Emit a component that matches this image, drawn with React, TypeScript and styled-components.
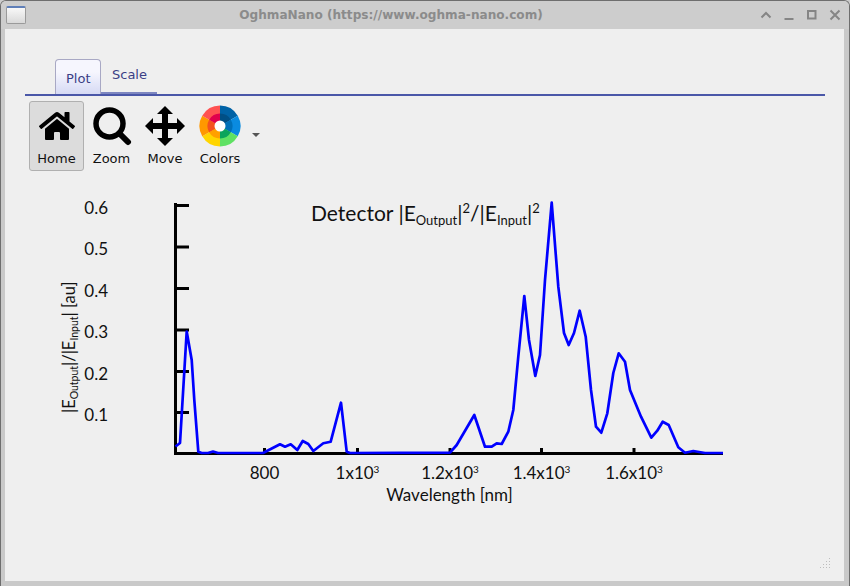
import React from "react";
import styled, { createGlobalStyle } from "styled-components";
import { FaHome } from "react-icons/fa";

const GlobalStyle = createGlobalStyle`
  html, body {
    margin: 0;
    padding: 0;
    background: #cdcdcd;
  }
`;

const Window = styled.div`
  width: 850px;
  height: 586px;
  box-sizing: border-box;
  display: flex;
  flex-direction: column;
  background: #c9c9c9;
  border: 1px solid #6e6e6e;
  border-bottom: 0;
  border-radius: 6px 6px 0 0;
  overflow: hidden;
  font-family: "DejaVu Sans", sans-serif;
`;

const TitleBar = styled.div`
  height: 28px;
  flex: none;
  display: flex;
  align-items: center;
  padding: 0 7px 0 5px;
  background: #cdcdcd;
`;

const AppIcon = styled.div`
  width: 20px;
  height: 18px;
  box-sizing: border-box;
  border: 1px solid #9a9a9a;
  border-top: 2px solid #5f7fb8;
  border-radius: 2px;
  background: linear-gradient(#f8f8f8, #d9d9d9);
`;

const Title = styled.div`
  flex: 1;
  text-align: center;
  font-size: 12.1px;
  font-weight: bold;
  color: #8b8b8b;
  padding-right: 3px;
`;

const Controls = styled.div`
  display: flex;
  gap: 9px;
`;

const Body = styled.div`
  flex: 1;
  margin: 0 5px 5px 4px;
  background: #efefef;
  display: flex;
  flex-direction: column;
  padding: 30px 19px 0 20px;
  position: relative;
`;

const TabBar = styled.div`
  display: flex;
  height: 35px;
  padding-left: 30px;
  border-bottom: 2px solid #4a57a8;
`;

const Tab = styled.div<{ $active?: boolean }>`
  box-sizing: border-box;
  height: 35px;
  width: ${({ $active }) => ($active ? "46px" : "56px")};
  padding-left: ${({ $active }) => ($active ? "10px" : "11px")};
  padding-top: ${({ $active }) => ($active ? "11px" : "8px")};
  font-size: 13px;
  color: #3b3f86;
  border-radius: 4px 4px 0 0;
  ${({ $active }) =>
    $active
      ? `border: 1px solid #a8a8c4;
         border-bottom: 0;
         background: linear-gradient(#f6f6fe 35%, #d6daf4);`
      : `border-bottom: 2px solid #7d86c0;
         border-radius: 0;`}
`;

const Toolbar = styled.div`
  display: flex;
  align-items: flex-start;
  gap: 0;
  padding: 5px 0 0 4px;
`;

const ToolButton = styled.div<{ $active?: boolean; $w: number }>`
  box-sizing: border-box;
  width: ${({ $w }) => $w}px;
  height: 70px;
  display: flex;
  flex-direction: column;
  align-items: center;
  font-size: 13px;
  color: #111;
  border-radius: 3px;
  border: 1px solid ${({ $active }) => ($active ? "#b0b0b0" : "transparent")};
  background: ${({ $active }) => ($active ? "#dcdcdc" : "transparent")};
`;

const ToolIcon = styled.div`
  height: 46px;
  margin: 1px 0 2px;
  display: flex;
  align-items: center;
  justify-content: center;
`;

const Caret = styled.div`
  width: 0;
  height: 0;
  margin: 32px 0 0 3px;
  border-left: 4px solid transparent;
  border-right: 4px solid transparent;
  border-top: 4px solid #555;
`;

const Chart = styled.svg`
  display: block;
  margin-top: 14px;
  font-family: Lato, sans-serif;
`;

const Grip = styled.svg`
  position: absolute;
  right: 12px;
  bottom: 12px;
`;

const curve =
  "175.5,446.5 180,443 186.7,331.5 191.7,360 194.3,400 198.3,451.7 201.7,453 208,453 213,451.5 218,453 263,453 280,444.3 285,446.7 290.7,444.3 297.3,450 302.7,441 308.3,444 313.3,451 323.3,443.3 330.7,441.7 341,402.7 346.7,451.7 350,453 450,452.7 456.7,445 474.3,415 485,446.7 491.7,446.7 496.7,443.3 501.7,444 508.3,431.7 513.3,410 518.3,356.7 524.3,296 529,340 535.3,376 540,355 545,280 551.7,202.7 558.3,286.7 564,333 568.7,345 574,333 579.7,310.7 585.7,336.7 591,390 596,426.7 601.3,432.7 607.3,413.3 613.3,373 618.7,353.3 625,361.7 630,390 641,416.7 651.3,437.7 657.3,430.7 662.7,421.7 668.7,425 678.3,447.3 685,452.7 693.3,451 705,453 723,453";

const yTicks = [
  { y: 205.5, label: "0.6" },
  { y: 247, label: "0.5" },
  { y: 288.5, label: "0.4" },
  { y: 330, label: "0.3" },
  { y: 371.5, label: "0.2" },
  { y: 412.5, label: "0.1" },
];

const xTicks = [
  { x: 264.5, label: "800", exp: false },
  { x: 357.5, label: "1x10", exp: true },
  { x: 450, label: "1.2x10", exp: true },
  { x: 541.5, label: "1.4x10", exp: true },
  { x: 634, label: "1.6x10", exp: true },
];

// one pie slice of a ring, angles in degrees from 12 o'clock
const slice = (r: number, a0: number, a1: number) => {
  const p = (a: number) => {
    const t = (a * Math.PI) / 180;
    return `${(r * Math.sin(t)).toFixed(2)} ${(-r * Math.cos(t)).toFixed(2)}`;
  };
  return `M0 0L${p(a0)}A${r} ${r} 0 0 1 ${p(a1)}Z`;
};

const outerColors = ["#0062a6", "#0a8be0", "#5fe163", "#ffd500", "#ff9800", "#ff5252"];
const innerColors = ["#004f86", "#0070b8", "#0ba45c", "#ffa000", "#f4511e", "#e0004d"];

const ColorWheel = () => (
  <svg width="44" height="44" viewBox="-22 -22 44 44">
    {outerColors.map((c, i) => (
      <path key={c} d={slice(20.5, i * 60, (i + 1) * 60)} fill={c} />
    ))}
    {innerColors.map((c, i) => (
      <path key={c} d={slice(12.5, i * 60, (i + 1) * 60)} fill={c} />
    ))}
    <circle r="5.5" fill="#fff" />
  </svg>
);

const App = () => {
  return (
    <>
      <GlobalStyle />
      <Window>
        <TitleBar>
          <AppIcon />
          <Title>OghmaNano (https://www.oghma-nano.com)</Title>
          <Controls>
            <svg width="14" height="14" viewBox="0 0 14 14" fill="none" stroke="#858585" strokeWidth="2">
              <path d="M2.5 9.5L7 5l4.5 4.5" />
            </svg>
            <svg width="14" height="14" viewBox="0 0 14 14" fill="none" stroke="#858585" strokeWidth="2">
              <path d="M2.5 11h9" />
            </svg>
            <svg width="14" height="14" viewBox="0 0 14 14" fill="none" stroke="#858585" strokeWidth="2">
              <rect x="3" y="3" width="7.5" height="7.5" />
            </svg>
            <svg width="14" height="14" viewBox="0 0 14 14" fill="none" stroke="#858585" strokeWidth="2">
              <path d="M2.5 2.5l9 9M11.5 2.5l-9 9" />
            </svg>
          </Controls>
        </TitleBar>
        <Body>
          <TabBar>
            <Tab $active>Plot</Tab>
            <Tab>Scale</Tab>
          </TabBar>
          <Toolbar>
            <ToolButton $active $w={55}>
              <ToolIcon>
                <FaHome size={36} color="#000" />
              </ToolIcon>
              Home
            </ToolButton>
            <ToolButton $w={55}>
              <ToolIcon>
                <svg width="40" height="40" viewBox="0 0 40 40" fill="none" stroke="#000">
                  <circle cx="17.5" cy="17.5" r="13.5" strokeWidth="5.5" />
                  <path d="M27.5 27.5L36 36" strokeWidth="6" strokeLinecap="round" />
                </svg>
              </ToolIcon>
              Zoom
            </ToolButton>
            <ToolButton $w={52}>
              <ToolIcon>
                <svg width="42" height="42" viewBox="0 0 42 42">
                  <path
                    d="M21 1l8 8h-5v9h9v-5l8 8-8 8v-5h-9v9h5l-8 8-8-8h5v-9H9v5l-8-8 8-8v5h9V9h-5z"
                    fill="#000"
                  />
                </svg>
              </ToolIcon>
              Move
            </ToolButton>
            <ToolButton $w={58}>
              <ToolIcon>
                <ColorWheel />
              </ToolIcon>
              Colors
            </ToolButton>
            <Caret />
          </Toolbar>
          <Chart width="800" height="340" viewBox="25 185 800 340">
            <g fill="#111" fontSize="17">
              {yTicks.map((t) => (
                <text key={t.label} x="108" y={t.y + 8} textAnchor="end">
                  {t.label}
                </text>
              ))}
              {xTicks.map((t) => (
                <text key={t.x} x={t.x} y="479" textAnchor="middle">
                  {t.label}
                  {t.exp && (
                    <tspan fontSize="10" dy="-6">
                      3
                    </tspan>
                  )}
                </text>
              ))}
              <text x="449.5" y="501" textAnchor="middle">
                Wavelength [nm]
              </text>
              <text transform="translate(75 413) rotate(-90)" fontSize="16.5">
                |E
                <tspan fontSize="10.5" dy="3">
                  Output
                </tspan>
                <tspan dy="-3">|/|E</tspan>
                <tspan fontSize="10.5" dy="3">
                  Input
                </tspan>
                <tspan dy="-3">| [au]</tspan>
              </text>
              <text x="311" y="221" fontSize="21">
                Detector |E
                <tspan fontSize="13" dy="4">
                  Output
                </tspan>
                <tspan dy="-4">|</tspan>
                <tspan fontSize="13" dy="-8">
                  2
                </tspan>
                <tspan dy="8">/|E</tspan>
                <tspan fontSize="13" dy="4">
                  Input
                </tspan>
                <tspan dy="-4">|</tspan>
                <tspan fontSize="13" dy="-8">
                  2
                </tspan>
              </text>
            </g>
            <g stroke="#000" fill="none">
              <path d="M175.5 203V454.5" strokeWidth="3" />
              <path d="M174 453.5H723" strokeWidth="3" />
              {yTicks.map((t) => (
                <path key={t.y} d={`M176 ${t.y}H189`} strokeWidth="3" />
              ))}
              {xTicks.map((t) => (
                <path key={t.x} d={`M${t.x} 453V448`} strokeWidth="3" />
              ))}
            </g>
            <polyline points={curve} fill="none" stroke="#0000ff" strokeWidth="2.7" strokeLinejoin="round" />
          </Chart>
          <Grip width="12" height="12" viewBox="0 0 12 12" fill="#bdbdbd">
            <rect x="9" y="1" width="1" height="1" />
            <rect x="6" y="4" width="1" height="1" />
            <rect x="9" y="4" width="1" height="1" />
            <rect x="3" y="7" width="1" height="1" />
            <rect x="6" y="7" width="1" height="1" />
            <rect x="9" y="7" width="1" height="1" />
            <rect x="0" y="10" width="1" height="1" />
            <rect x="3" y="10" width="1" height="1" />
            <rect x="6" y="10" width="1" height="1" />
            <rect x="9" y="10" width="1" height="1" />
          </Grip>
        </Body>
      </Window>
    </>
  );
};

export default App;
